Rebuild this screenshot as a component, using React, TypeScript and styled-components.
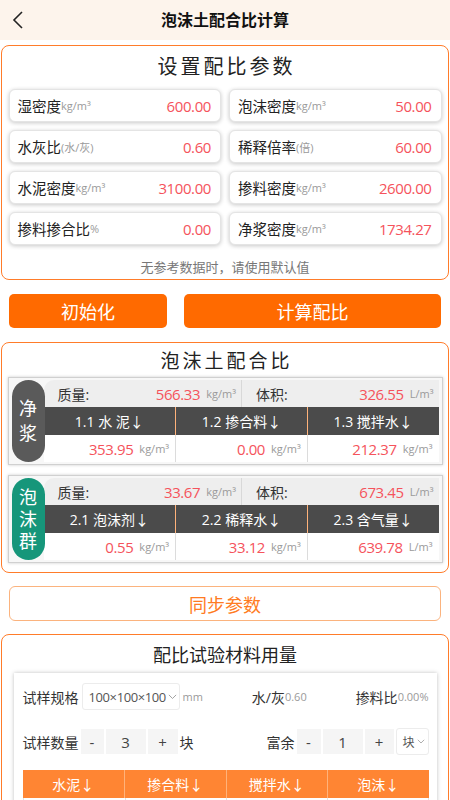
import React from "react";
import styled, { createGlobalStyle } from "styled-components";

const FONT = `"Open Sans", "Noto Sans CJK SC", sans-serif`;

const Global = createGlobalStyle`
  html, body { margin: 0; padding: 0; background: #fff; }
  body { font-family: ${FONT}; color: #222; width: 450px; }
  * { box-sizing: border-box; }
`;

const Header = styled.header`
  height: 40px;
  background: #fdf4ec;
  display: grid;
  grid-template-columns: 40px 1fr 40px;
  align-items: center;
`;
const Back = styled.div`
  display: flex;
  align-items: center;
  padding-left: 12px;
  height: 40px;
`;
const HeaderTitle = styled.h1`
  margin: 0;
  text-align: center;
  font-size: 16px;
  font-weight: 700;
  color: #111;
  line-height: 40px;
`;

const Panel = styled.section<{ $mt: number; $px: number; $pb: number }>`
  margin: ${(p) => p.$mt}px 1px 0 1px;
  border: 1.5px solid #ff7c2a;
  border-radius: 8px;
  background: #fff;
  padding: 0 ${(p) => p.$px}px ${(p) => p.$pb}px;
`;
const PanelTitle = styled.h2<{ $size: number; $ls: number; $pt: number; $lh: number }>`
  margin: 0;
  padding-top: ${(p) => p.$pt}px;
  text-align: center;
  font-size: ${(p) => p.$size}px;
  letter-spacing: ${(p) => p.$ls}px;
  text-indent: ${(p) => p.$ls}px;
  line-height: ${(p) => p.$lh}px;
  font-weight: 400;
  color: #222;
`;

const FieldGrid = styled.div`
  display: grid;
  grid-template-columns: 1fr 1fr;
  gap: 8px;
  margin-top: 7px;
`;
const Field = styled.div`
  height: 33px;
  display: flex;
  align-items: center;
  padding: 0 9px 0 8px;
  border-radius: 6px;
  border: 1px solid #e4e4e4;
  box-shadow: 0 1px 4px rgba(0, 0, 0, 0.22);
  background: #fff;
`;
const Label = styled.span`
  font-size: 14px;
  color: #222;
  white-space: nowrap;
`;
const FieldLabel = styled(Label)`
  font-size: 14.5px;
`;
const SmallUnit = styled.span<{ $ml?: number }>`
  font-size: 11px;
  color: #9a9a9a;
  margin-left: ${(p) => p.$ml ?? 0}px;
  white-space: nowrap;
`;
const RedValue = styled.span<{ $auto?: boolean }>`
  font-size: 15px;
  letter-spacing: -0.4px;
  color: #f5535c;
  margin-left: ${(p) => (p.$auto ? "auto" : "0")};
`;
const Hint = styled.p`
  margin: 12px 0 0;
  text-align: center;
  font-size: 13px;
  line-height: 20px;
  color: #777;
`;

const ButtonRow = styled.div`
  display: flex;
  gap: 17px;
  padding: 0 9px;
  margin-top: 14px;
`;
const SolidButton = styled.button<{ $w?: number }>`
  height: 34px;
  ${(p) => (p.$w ? `width: ${p.$w}px; flex: none;` : "flex: 1;")}
  border: none;
  border-radius: 5px;
  background: #ff6a00;
  color: #fff;
  font-family: ${FONT};
  font-size: 18px;
  padding: 0;
`;
const OutlineButton = styled.button`
  display: block;
  width: 432px;
  height: 35px;
  margin: 13px 0 0 9px;
  border: 1px solid #fbb37e;
  border-radius: 6px;
  background: #fff;
  color: #ff7b22;
  font-family: ${FONT};
  font-size: 18px;
  padding: 0;
`;

const Group = styled.div<{ $mt: number }>`
  margin-top: ${(p) => p.$mt}px;
  display: flex;
  padding: 2px 3px;
  border: 1px solid #d0d0d0;
  background: #f7f7f7;
  box-shadow: 0 0 3px rgba(0, 0, 0, 0.2);
`;
const Badge = styled.div<{ $bg: string; $lh: number }>`
  width: 33px;
  flex: none;
  border-radius: 17px;
  background: ${(p) => p.$bg};
  color: #fff;
  font-size: 18px;
  line-height: ${(p) => p.$lh}px;
  display: flex;
  flex-direction: column;
  align-items: center;
  justify-content: center;
  position: relative;
  z-index: 1;
`;
const GroupBody = styled.div`
  flex: 1;
  display: flex;
  flex-direction: column;
  margin-left: -1px;
`;
const SummaryRow = styled.div`
  display: grid;
  grid-template-columns: 1fr 1fr;
  height: 27px;
  background: #eeeeee;
  border-top-left-radius: 10px;
`;
const SummaryCell = styled.div<{ $divider?: boolean }>`
  display: flex;
  align-items: center;
  padding: 0 5px 0 14px;
  border-left: ${(p) => (p.$divider ? "1px solid #d8d8d8" : "none")};
`;
const SumLabel = styled(Label)`
  color: #333;
  margin-right: auto;
`;
const HeadRow = styled.div<{ $cols: number; $bg: string; $h: number }>`
  display: grid;
  grid-template-columns: repeat(${(p) => p.$cols}, 1fr);
  height: ${(p) => p.$h}px;
  background: ${(p) => p.$bg};
`;
const HeadCell = styled.div<{ $line: string }>`
  display: flex;
  align-items: center;
  justify-content: center;
  color: #fff;
  font-size: 14px;
  & + & {
    border-left: 1px solid ${(p) => p.$line};
  }
`;
const ValueRow = styled.div`
  display: grid;
  grid-template-columns: repeat(3, 1fr);
  height: 27px;
  background: #fff;
`;
const ValueCell = styled.div`
  display: flex;
  align-items: center;
  justify-content: flex-end;
  padding-right: 6px;
  & + & {
    border-left: 1px solid #dcdcdc;
  }
`;

const Card = styled.div`
  margin-top: 4px;
  background: #fff;
  box-shadow: 0 0 4px rgba(0, 0, 0, 0.25);
  padding: 10px 8px 0 9px;
`;
const CardRow = styled.div<{ $mt?: number }>`
  display: flex;
  align-items: center;
  justify-content: space-between;
  margin-top: ${(p) => p.$mt ?? 0}px;
`;
const Inline = styled.div<{ $gap?: number }>`
  display: flex;
  align-items: center;
  gap: ${(p) => p.$gap ?? 0}px;
`;
const CardLabel = styled(Label)`
  color: #333;
`;
const Select = styled.div<{ $w: number; $fs: number }>`
  width: ${(p) => p.$w}px;
  height: 27px;
  display: flex;
  align-items: center;
  justify-content: space-between;
  gap: 2px;
  padding: 0 3px 0 6px;
  border: 1px solid #ececec;
  border-radius: 3px;
  background: #fff;
  font-size: ${(p) => p.$fs}px;
  letter-spacing: -0.4px;
  color: #555;
  white-space: nowrap;
`;
const StepBox = styled.div<{ $w: number }>`
  width: ${(p) => p.$w}px;
  height: 25px;
  display: flex;
  align-items: center;
  justify-content: center;
  background: #f5f5f5;
  font-size: 15px;
  color: #444;
`;
const Table = styled.div`
  margin-top: 15px;
`;
const BodyRow = styled.div`
  display: grid;
  grid-template-columns: repeat(4, 1fr);
  height: 28px;
  border-left: 1px solid #e3e3e3;
  border-right: 1px solid #e3e3e3;
`;
const BodyCell = styled.div`
  & + & {
    border-left: 1px solid #e3e3e3;
  }
`;
const ChevronSvg = styled.svg`
  flex: none;
`;

const Chevron = ({ size = 9 }: { size?: number }) => (
  <ChevronSvg width={size} height={size * 0.6} viewBox="0 0 10 6" fill="none">
    <polyline points="1,1 5,5 9,1" stroke="#999" strokeWidth="1" />
  </ChevronSvg>
);

const params: [string, string, string][] = [
  ["湿密度", "kg/m³", "600.00"],
  ["泡沫密度", "kg/m³", "50.00"],
  ["水灰比", "(水/灰)", "0.60"],
  ["稀释倍率", "(倍)", "60.00"],
  ["水泥密度", "kg/m³", "3100.00"],
  ["掺料密度", "kg/m³", "2600.00"],
  ["掺料掺合比", "%", "0.00"],
  ["净浆密度", "kg/m³", "1734.27"],
];

type GroupData = {
  badge: string[];
  bg: string;
  lh: number;
  mass: string;
  vol: string;
  heads: string[];
  vals: [string, string][];
};

const groups: GroupData[] = [
  {
    badge: ["净", "浆"],
    bg: "#5a5a5a",
    lh: 25,
    mass: "566.33",
    vol: "326.55",
    heads: ["1.1 水 泥↓", "1.2 掺合料↓", "1.3 搅拌水↓"],
    vals: [
      ["353.95", "kg/m³"],
      ["0.00", "kg/m³"],
      ["212.37", "kg/m³"],
    ],
  },
  {
    badge: ["泡", "沫", "群"],
    bg: "#16967a",
    lh: 22,
    mass: "33.67",
    vol: "673.45",
    heads: ["2.1 泡沫剂↓", "2.2 稀释水↓", "2.3 含气量↓"],
    vals: [
      ["0.55", "kg/m³"],
      ["33.12", "kg/m³"],
      ["639.78", "L/m³"],
    ],
  },
];

export default function App() {
  return (
    <>
      <Global />
      <Header>
        <Back>
          <svg width="12" height="18" viewBox="0 0 12 18" fill="none">
            <polyline points="10,1 2,9 10,17" stroke="#222" strokeWidth="1.6" />
          </svg>
        </Back>
        <HeaderTitle>泡沫土配合比计算</HeaderTitle>
        <div />
      </Header>

      <Panel $mt={5} $px={6.5} $pb={2}>
        <PanelTitle $size={20} $ls={3} $pt={6} $lh={30}>
          设置配比参数
        </PanelTitle>
        <FieldGrid>
          {params.map(([l, u, v]) => (
            <Field key={l}>
              <FieldLabel>{l}</FieldLabel>
              <SmallUnit>{u}</SmallUnit>
              <RedValue $auto>{v}</RedValue>
            </Field>
          ))}
        </FieldGrid>
        <Hint>无参考数据时，请使用默认值</Hint>
      </Panel>

      <ButtonRow>
        <SolidButton $w={158}>初始化</SolidButton>
        <SolidButton>计算配比</SolidButton>
      </ButtonRow>

      <Panel $mt={14} $px={5.5} $pb={9}>
        <PanelTitle $size={19} $ls={3} $pt={4} $lh={28}>
          泡沫土配合比
        </PanelTitle>
        {groups.map((g, i) => (
          <Group key={i} $mt={i === 0 ? 2 : 10}>
            <Badge $bg={g.bg} $lh={g.lh}>
              {g.badge.map((c) => (
                <span key={c}>{c}</span>
              ))}
            </Badge>
            <GroupBody>
              <SummaryRow>
                <SummaryCell>
                  <SumLabel>质量:</SumLabel>
                  <RedValue>{g.mass}</RedValue>
                  <SmallUnit $ml={6}>kg/m³</SmallUnit>
                </SummaryCell>
                <SummaryCell $divider>
                  <SumLabel>体积:</SumLabel>
                  <RedValue>{g.vol}</RedValue>
                  <SmallUnit $ml={6}>L/m³</SmallUnit>
                </SummaryCell>
              </SummaryRow>
              <HeadRow $cols={3} $bg="#4b4b4b" $h={28}>
                {g.heads.map((h) => (
                  <HeadCell key={h} $line="#6a6a6a">
                    {h}
                  </HeadCell>
                ))}
              </HeadRow>
              <ValueRow>
                {g.vals.map(([v, u], k) => (
                  <ValueCell key={k}>
                    <RedValue>{v}</RedValue>
                    <SmallUnit $ml={6}>{u}</SmallUnit>
                  </ValueCell>
                ))}
              </ValueRow>
            </GroupBody>
          </Group>
        ))}
      </Panel>

      <OutlineButton>同步参数</OutlineButton>

      <Panel $mt={13} $px={11.5} $pb={10}>
        <PanelTitle $size={18} $ls={0} $pt={6} $lh={28}>
          配比试验材料用量
        </PanelTitle>
        <Card>
          <CardRow>
            <Inline $gap={3}>
              <CardLabel>试样规格</CardLabel>
              <Select $w={98} $fs={13}>
                <span>100×100×100</span>
                <Chevron />
              </Select>
              <SmallUnit>mm</SmallUnit>
            </Inline>
            <Inline>
              <CardLabel>水/灰</CardLabel>
              <SmallUnit>0.60</SmallUnit>
            </Inline>
            <Inline>
              <CardLabel>掺料比</CardLabel>
              <SmallUnit>0.00%</SmallUnit>
            </Inline>
          </CardRow>
          <CardRow $mt={18}>
            <Inline $gap={2}>
              <CardLabel>试样数量</CardLabel>
              <StepBox $w={23}>-</StepBox>
              <StepBox $w={40}>3</StepBox>
              <StepBox $w={30}>+</StepBox>
              <CardLabel>块</CardLabel>
            </Inline>
            <Inline $gap={2}>
              <CardLabel>富余</CardLabel>
              <StepBox $w={24}>-</StepBox>
              <StepBox $w={40}>1</StepBox>
              <StepBox $w={29}>+</StepBox>
              <Select $w={33} $fs={12}>
                <span>块</span>
                <Chevron size={8} />
              </Select>
            </Inline>
          </CardRow>
          <Table>
            <HeadRow $cols={4} $bg="#ff8533" $h={28}>
              {["水泥↓", "掺合料↓", "搅拌水↓", "泡沫↓"].map((h) => (
                <HeadCell key={h} $line="#ffb27a">
                  {h}
                </HeadCell>
              ))}
            </HeadRow>
            <BodyRow>
              <BodyCell />
              <BodyCell />
              <BodyCell />
              <BodyCell />
            </BodyRow>
          </Table>
        </Card>
      </Panel>
    </>
  );
}
